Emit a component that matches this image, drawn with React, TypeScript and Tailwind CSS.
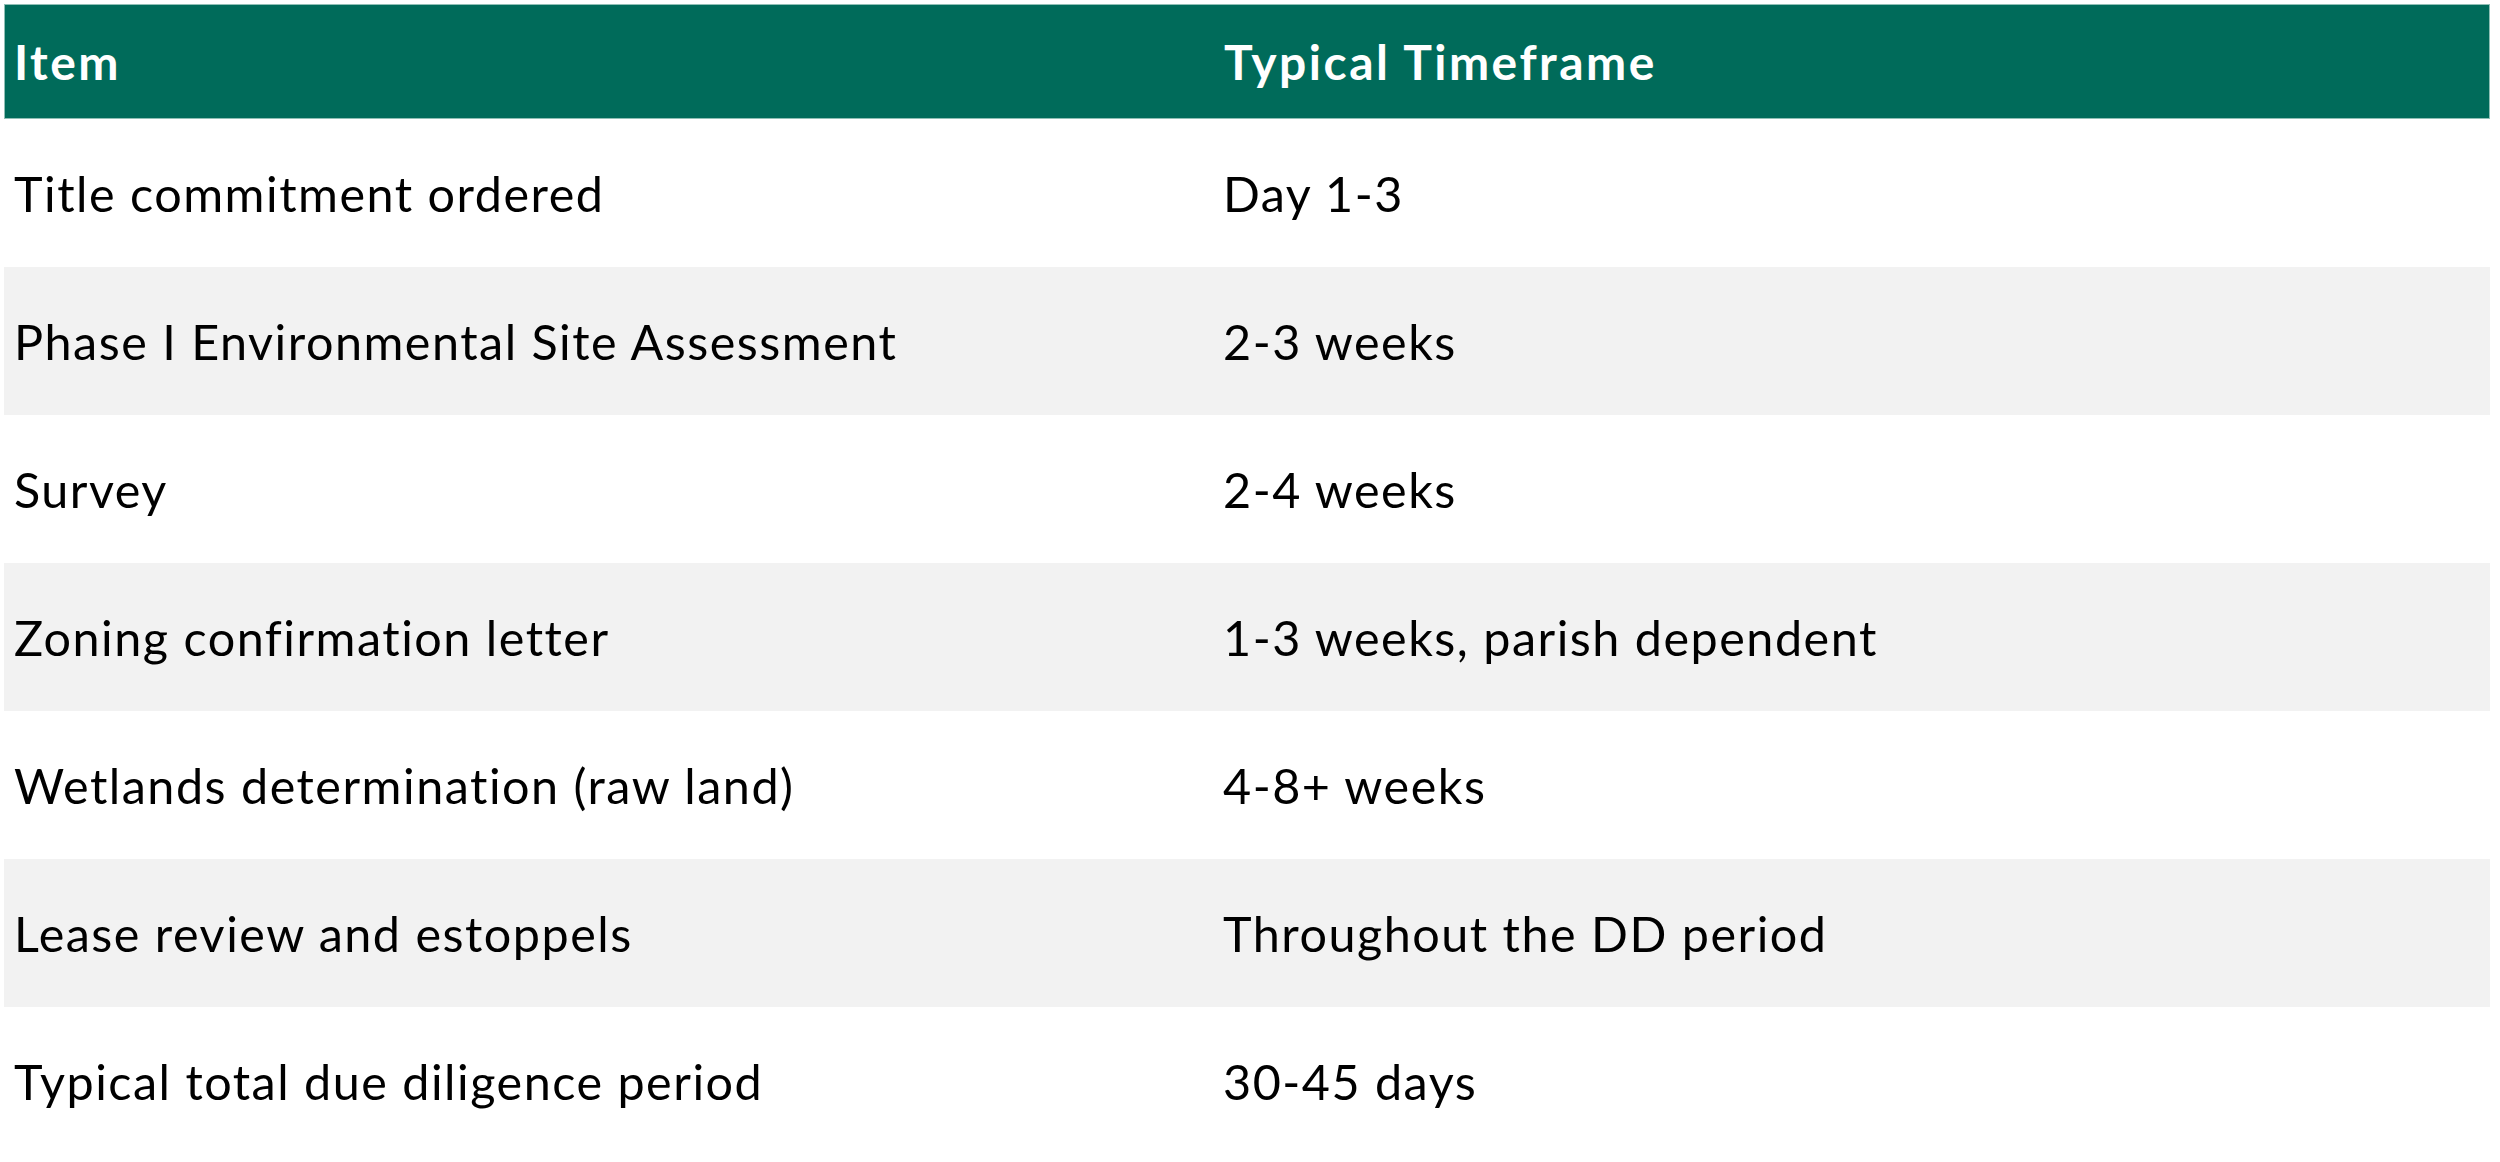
import React from "react";

const rows: [string, string][] = [
  ["Title commitment ordered", "Day 1-3"],
  ["Phase I Environmental Site Assessment", "2-3 weeks"],
  ["Survey", "2-4 weeks"],
  ["Zoning confirmation letter", "1-3 weeks, parish dependent"],
  ["Wetlands determination (raw land)", "4-8+ weeks"],
  ["Lease review and estoppels", "Throughout the DD period"],
  ["Typical total due diligence period", "30-45 days"],
];

export default function App() {
  return (
    <div className="w-[2500px] h-[1162px] bg-white overflow-hidden pl-[4px] pt-[4px] font-['Lato','Liberation_Sans',sans-serif] [font-variant-ligatures:none]">
      <div className="w-[2486px]">
        <div className="grid grid-cols-[1209px_1fr] h-[115px] bg-[#006b5a] text-white font-bold text-[48px] tracking-[2.5px] items-center border border-[#8fbfb5]">
          <div className="pl-[9px]">Item</div>
          <div className="pl-[10px]">Typical Timeframe</div>
        </div>
        {rows.map(([a, b], i) => (
          <div
            key={a}
            className={`grid grid-cols-[1209px_1fr] h-[148px] items-center text-[48.5px] tracking-[1.5px] text-black ${i % 2 === 1 ? "bg-[#f2f2f2]" : "bg-white"}`}
          >
            <div className="pl-[10px]">{a}</div>
            <div className="pl-[10px]">{b}</div>
          </div>
        ))}
      </div>
    </div>
  );
}
